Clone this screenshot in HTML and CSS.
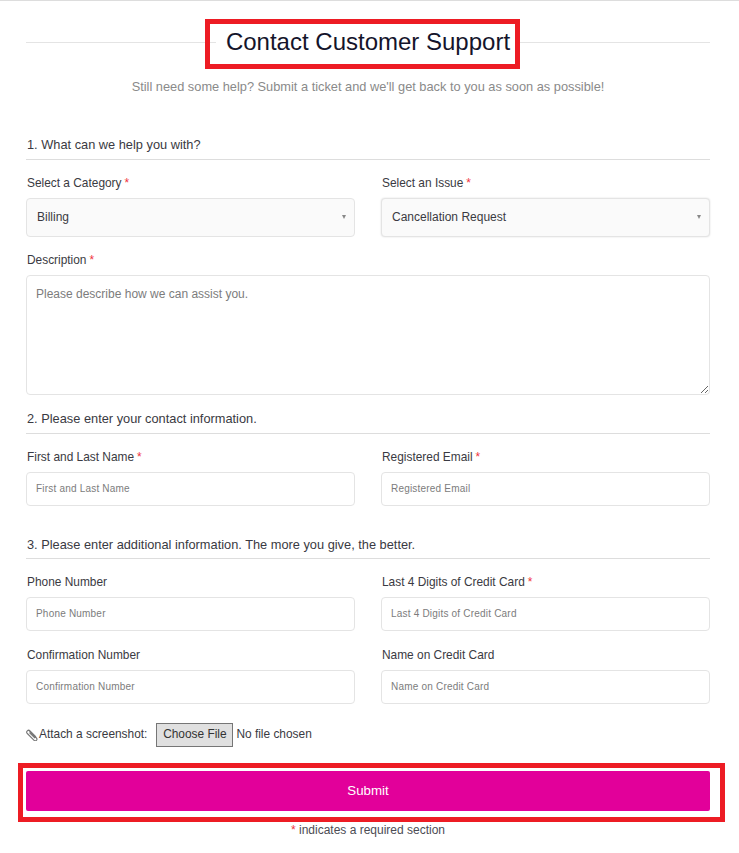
FILE: index.html
```html
<!DOCTYPE html>
<html lang="en">
<head>
  <meta charset="UTF-8" />
  <title>Contact Customer Support</title>
  <link rel="stylesheet" href="styles.css">
</head>
<body>
  <form class="support-form">
    <div class="title-row">
      <h1>Contact Customer Support</h1>
      <div class="callout callout-title"></div>
    </div>
    <p class="intro">Still need some help? Submit a ticket and we'll get back to you as soon as possible!</p>

    <h2 class="section-first">1. What can we help you with?</h2>
    <div class="field-grid">
      <div class="field">
        <label>Select a Category<span class="req">*</span></label>
        <div class="select-wrap">
          <select><option>Billing</option></select>
        </div>
      </div>
      <div class="field">
        <label>Select an Issue<span class="req">*</span></label>
        <div class="select-wrap">
          <select class="raised"><option>Cancellation Request</option></select>
        </div>
      </div>
    </div>
    <div class="field field-desc">
      <label>Description<span class="req">*</span></label>
      <textarea placeholder="Please describe how we can assist you."></textarea>
    </div>

    <h2 class="section-second">2. Please enter your contact information.</h2>
    <div class="field-grid">
      <div class="field">
        <label>First and Last Name<span class="req">*</span></label>
        <input type="text" placeholder="First and Last Name" />
      </div>
      <div class="field">
        <label>Registered Email<span class="req">*</span></label>
        <input type="text" placeholder="Registered Email" />
      </div>
    </div>

    <h2 class="section-third">3. Please enter additional information. The more you give, the better.</h2>
    <div class="field-grid">
      <div class="field">
        <label>Phone Number</label>
        <input type="text" placeholder="Phone Number" />
      </div>
      <div class="field">
        <label>Last 4 Digits of Credit Card<span class="req">*</span></label>
        <input type="text" placeholder="Last 4 Digits of Credit Card" />
      </div>
      <div class="field">
        <label>Confirmation Number</label>
        <input type="text" placeholder="Confirmation Number" />
      </div>
      <div class="field">
        <label>Name on Credit Card</label>
        <input type="text" placeholder="Name on Credit Card" />
      </div>
    </div>

    <div class="attach">
      <svg class="clip" viewBox="0 0 12 12" width="12" height="12" aria-hidden="true">
        <path d="M2.6 1.2 10.4 9a1.6 1.6 0 0 1-2.3 2.3L1.3 4.5A1.9 1.9 0 0 1 4 1.8l6 6M3.4 3.6l5.6 5.6" fill="none" stroke="#777" stroke-width="1.1"/>
      </svg>
      <span class="attach-label">Attach a screenshot:</span>
      <span class="file-btn">Choose File</span>
      <span class="file-name">No file chosen</span>
    </div>

    <div class="submit-row">
      <button type="button">Submit</button>
      <div class="callout callout-submit"></div>
    </div>
    <p class="legend"><span class="req-plain">*</span> indicates a required section</p>
  </form>
</body>
</html>
```

FILE: styles.css
```css
* {
  box-sizing: border-box;
}

body {
  margin: 0;
  background: #fff;
  color: #3a3a42;
  font-family: "Liberation Sans", Arial, sans-serif;
  font-size: 11.9px;
  border-top: 1px solid #ddd;
}

.support-form {
  padding: 0 29px 0 26px;
}

.title-row {
  position: relative;
  display: flex;
  justify-content: center;
  height: 50px;
  margin-top: 18px;
  padding-bottom: 4px;
  align-items: center;
}

.title-row::before {
  content: "";
  position: absolute;
  left: 0;
  right: 0;
  top: 23px;
  border-top: 1px solid #e4e4e4;
}

h1 {
  position: relative;
  margin: 0;
  padding: 0 10px;
  background: #fff;
  color: #14142b;
  font-size: 24px;
  font-weight: 400;
  line-height: 30px;
}

.callout {
  position: absolute;
  border: 5px solid #ed1c24;
  pointer-events: none;
}

.callout-title {
  left: 179px;
  top: 0;
  width: 315px;
  height: 50px;
}

.callout-submit {
  left: -8px;
  right: -15px;
  top: -8px;
  bottom: -11px;
}

.intro {
  margin: 9px 0 0;
  text-align: center;
  color: #8a8a8a;
  font-size: 12.8px;
  line-height: 18px;
}

h2 {
  margin: 0 0 15px;
  padding: 0 0 6px 1px;
  border-bottom: 1px solid #ddd;
  font-size: 12.8px;
  font-weight: 400;
  line-height: 18px;
}

.section-first {
  margin-top: 40px;
  padding-bottom: 5px;
}

.section-second {
  margin-top: 15px;
  padding-bottom: 5px;
}

.section-third {
  margin-top: 30px;
  padding-bottom: 4px;
}

.field-grid {
  display: grid;
  grid-template-columns: 1fr 1fr;
  column-gap: 26px;
  row-gap: 16px;
}

.field {
  display: flex;
  flex-direction: column;
}

.field-desc {
  margin-top: 15px;
}

label {
  padding-left: 1px;
  margin-bottom: 7px;
  font-size: 11.9px;
  line-height: 16px;
}

.req {
  margin-left: 3px;
  color: #f0333c;
}

.req-plain {
  color: #f0333c;
}

.select-wrap {
  position: relative;
}

.select-wrap::after {
  content: "";
  position: absolute;
  right: 9px;
  top: 17px;
  border-left: 2.5px solid transparent;
  border-right: 2.5px solid transparent;
  border-top: 4px solid #888;
}

select {
  appearance: none;
  display: block;
  width: 100%;
  height: 39px;
  padding: 0 0 2px 10px;
  background: #fafafa;
  border: 1px solid #e4e4e4;
  border-radius: 4px;
  color: #3a3a42;
  font-family: inherit;
  font-size: 12px;
}

select.raised {
  box-shadow: 0 0 2px #ddd;
}

textarea {
  display: block;
  width: 100%;
  height: 120px;
  padding: 11px 10px 10px 9px;
  background: #fff;
  border: 1px solid #e4e4e4;
  border-radius: 4px;
  font-family: inherit;
  font-size: 12px;
}

input {
  display: block;
  width: 100%;
  height: 34px;
  padding: 0 10px 2px 9px;
  background: #fff;
  border: 1px solid #e4e4e4;
  border-radius: 4px;
  font-family: inherit;
  font-size: 10px;
}

input::placeholder,
textarea::placeholder {
  color: #7c7c7c;
  opacity: 1;
}

input::placeholder {
  letter-spacing: 0.2px;
}

.attach {
  display: flex;
  align-items: center;
  height: 24px;
  margin-top: 19px;
}

.attach-label {
  margin-right: 9px;
  margin-left: 1px;
  margin-bottom: 2px;
}

.file-btn {
  display: flex;
  align-items: center;
  justify-content: center;
  width: 77px;
  height: 24px;
  margin-right: 3px;
  padding-bottom: 3px;
  background: #e0e0e0;
  border: 1px solid #767676;
  color: #333;
}

.file-name {
  margin-bottom: 2px;
}

.submit-row {
  position: relative;
  margin-top: 24px;
}

button {
  display: block;
  width: 100%;
  height: 40px;
  padding: 0 0 2px;
  background: #e2009a;
  border: none;
  border-radius: 2px;
  color: #fff;
  font-family: inherit;
  font-size: 13.3px;
  font-weight: 400;
}

.legend {
  margin: 11px 0 0;
  text-align: center;
  color: #4c4c54;
  font-size: 12px;
  line-height: 16px;
}
```
